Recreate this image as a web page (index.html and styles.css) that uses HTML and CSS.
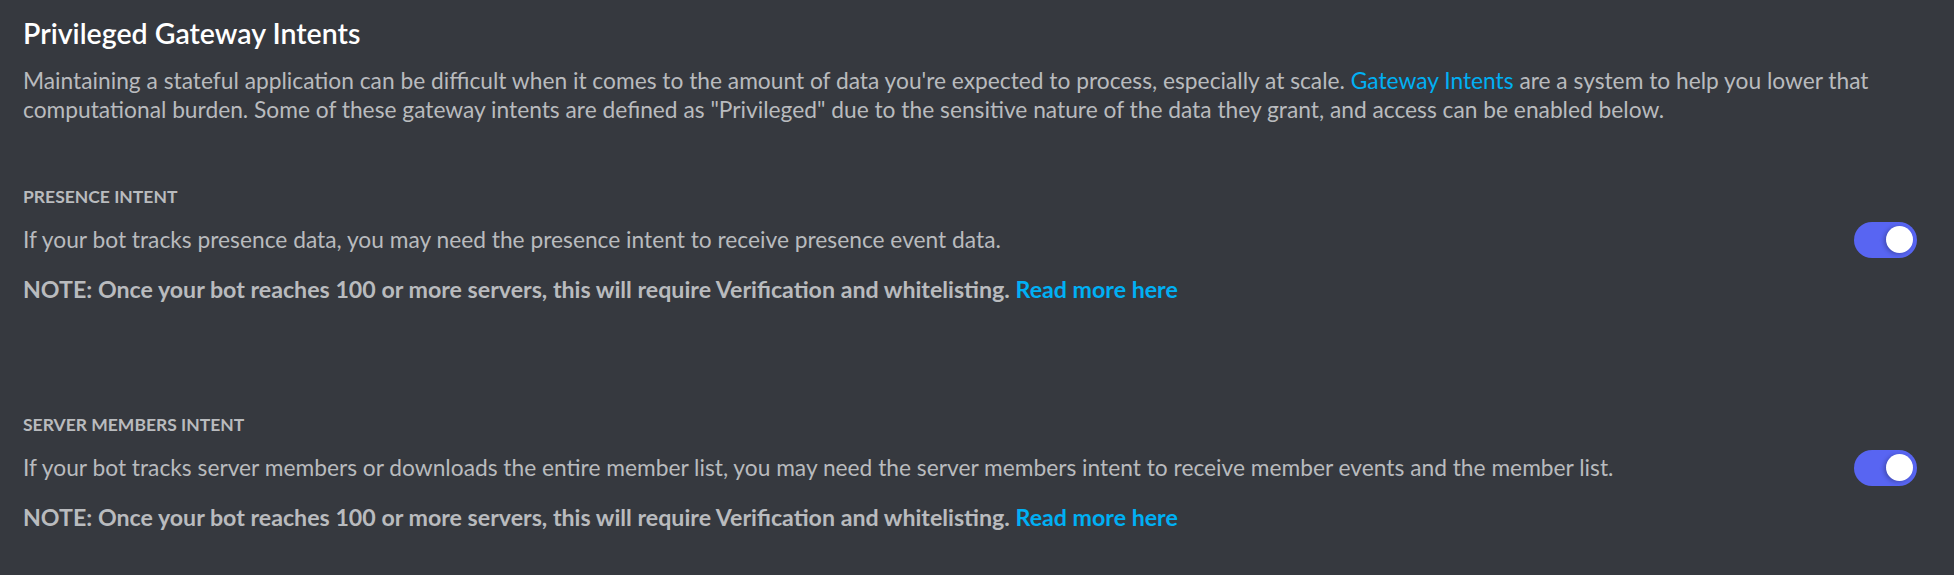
FILE: index.html
```html
<!DOCTYPE html>
<html lang="en">
<head>
<meta charset="utf-8">
<title>Privileged Gateway Intents</title>
<link rel="stylesheet" href="styles.css">
</head>
<body>
<main class="page">
  <h2 class="title">Privileged Gateway Intents</h2>
  <p class="intro">Maintaining a stateful application can be difficult when it comes to the amount of data you're expected to process, especially at scale. <a class="link" href="#">Gateway Intents</a> are a system to help you lower that computational burden. Some of these gateway intents are defined as "Privileged" due to the sensitive nature of the data they grant, and access can be enabled below.</p>

  <section class="intent">
    <h3 class="label">Presence Intent</h3>
    <div class="row">
      <p class="desc">If your bot tracks presence data, you may need the presence intent to receive presence event data.</p>
      <div class="toggle"><span class="knob"></span></div>
    </div>
    <p class="note">NOTE: Once your bot reaches 100 or more servers, this will require Verification and whitelisting. <a class="link" href="#">Read more here</a></p>
  </section>

  <section class="intent">
    <h3 class="label">Server Members Intent</h3>
    <div class="row">
      <p class="desc">If your bot tracks server members or downloads the entire member list, you may need the server members intent to receive member events and the member list.</p>
      <div class="toggle"><span class="knob"></span></div>
    </div>
    <p class="note">NOTE: Once your bot reaches 100 or more servers, this will require Verification and whitelisting. <a class="link" href="#">Read more here</a></p>
  </section>
</main>
</body>
</html>
```

FILE: styles.css
```css
html, body {
  margin: 0;
  padding: 0;
  background: #36393f;
}

body {
  font-family: "Lato", "Liberation Sans", sans-serif;
  color: #b9bbbe;
}

.page {
  padding: 17px 37px 0 23px;
  display: flex;
  flex-direction: column;
}

.title {
  margin: 0;
  font-size: 28.5px;
  line-height: 32px;
  font-weight: 600;
  color: #ffffff;
}

.intro {
  margin: 16.7px 0 0;
  font-size: 22.75px;
  line-height: 29px;
}

.link {
  color: #00b0f4;
  text-decoration: none;
}

.intent {
  display: flex;
  flex-direction: column;
  margin-top: 63.8px;
}

.intent + .intent {
  margin-top: 111px;
}

.label {
  margin: 0;
  font-size: 17.5px;
  line-height: 20px;
  font-weight: 700;
  text-transform: uppercase;
  color: #b9bbbe;
}

.row {
  display: flex;
  align-items: center;
  justify-content: space-between;
  margin-top: 14.5px;
  height: 36px;
}

.desc {
  margin: 0;
  font-size: 22.75px;
  line-height: 29px;
}

.toggle {
  flex: none;
  width: 63px;
  height: 36px;
  border-radius: 18px;
  background: #5865f2;
  display: flex;
  align-items: center;
  justify-content: flex-end;
  padding-right: 4px;
  box-sizing: border-box;
}

.knob {
  width: 27px;
  height: 27px;
  border-radius: 50%;
  background: #ffffff;
  box-shadow: -2px 1px 4px rgba(0, 0, 0, 0.25);
}

.note {
  margin: 17.5px 0 0;
  font-size: 23.2px;
  line-height: 29px;
  font-weight: 700;
}
```
